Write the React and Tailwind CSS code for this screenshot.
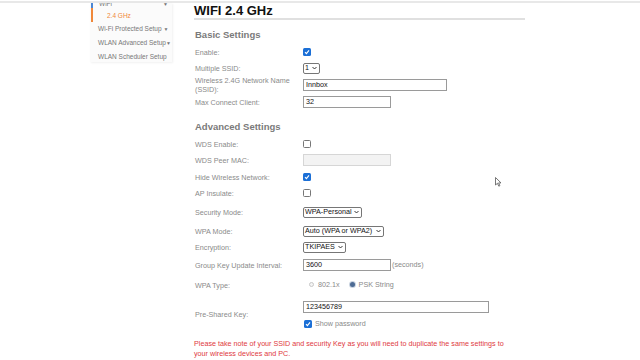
import React from 'react';

const font = { fontFamily: '"Liberation Sans", Arial, sans-serif' };

function Check({ on }) {
  if (on) {
    return (
      <span className="w-[8px] h-[8px] rounded-[1.5px] bg-[#1b6fd6] flex items-center justify-center">
        <svg width="6" height="6" viewBox="0 0 6 6">
          <path d="M1 3.2 L2.4 4.6 L5 1.4" stroke="#fff" strokeWidth="1.1" fill="none" />
        </svg>
      </span>
    );
  }
  return <span className="w-[8px] h-[8px] rounded-[1.5px] border border-[#777] bg-white" />;
}

function Select({ w, text }) {
  return (
    <div className={`${w} h-[11px] border border-[#767676] rounded-[2px] flex items-center justify-between pl-[1px] pr-[2px] text-[7.2px] text-[#111] leading-none`}>
      <span>{text}</span>
      <svg width="5" height="4" viewBox="0 0 5 4">
        <path d="M0.5 1 L2.5 3 L4.5 1" stroke="#222" strokeWidth="0.9" fill="none" />
      </svg>
    </div>
  );
}

function Input({ w, value, disabled }) {
  return (
    <div
      className={`${w} h-[12px] border flex items-center px-[2px] text-[7.2px] leading-none text-[#111] ${
        disabled ? 'bg-[#f3f3f3] border-[#d6d6d6]' : 'bg-white border-[#9a9a9a]'
      }`}
    >
      {value}
    </div>
  );
}

function Row({ label, cls, children }) {
  return (
    <div className={`flex items-center ${cls}`}>
      <div className="w-[109px] pl-[1px] text-[7.2px] leading-[9px] text-[#8a8a8a]">{label}</div>
      <div className="flex items-center gap-[1px]">{children}</div>
    </div>
  );
}

export default function App() {
  return (
    <div style={font} className="relative w-[640px] h-[360px] overflow-hidden bg-white">
      <div className="mt-[1px] h-[2px] bg-[#e8e8e8]" />
      <div className="flex items-start">
        {/* side menu */}
        <div className="ml-[90px] w-[82px] h-[59px] overflow-hidden bg-[#fbfbfb] shadow-[1px_1px_2px_rgba(0,0,0,0.06)] text-[6.5px] text-[#777] leading-[13px]">
          <div className="-mt-[3px] h-[8px] flex items-start justify-between border-l-2 border-[#4a86d4] pl-[6px] pr-[4px] ml-[1px] leading-[8px]">
            <span>WiFi</span>
            <span className="text-[5px]">▼</span>
          </div>
          <div className="h-[14px] flex items-center border-l-2 border-[#f0883a] ml-[1px] pl-[14px] text-[#f0883a]">
            2.4 GHz
          </div>
          <div className="pl-[8px]">
            Wi-Fi Protected Setup <span className="text-[5px]">▼</span>
          </div>
          <div className="pl-[8px]">
            WLAN Advanced Setup<span className="text-[5px]">▼</span>
          </div>
          <div className="pl-[8px]">WLAN Scheduler Setup</div>
        </div>

        {/* main */}
        <div className="ml-[22px] w-[331px]">
          <h1 className="text-[13px] font-bold leading-[15px] text-[#111] border-b-2 border-[#e0e0e0]">WIFI 2.4 GHz</h1>
          <h2 className="mt-[9px] pl-[1px] text-[9.5px] font-bold leading-[12px] text-[#7a7a7a]">Basic Settings</h2>

          <Row label="Enable:" cls="mt-[3px] h-[16px]">
            <Check on />
          </Row>
          <Row label="Multiple SSID:" cls="h-[16px]">
            <Select w="w-[17px]" text="1" />
          </Row>
          <Row label={<>Wireless 2.4G Network Name<br />(SSID):</>} cls="h-[18px]">
            <Input w="w-[144px]" value="Innbox" />
          </Row>
          <Row label="Max Connect Client:" cls="h-[16px]">
            <Input w="w-[88px]" value="32" />
          </Row>

          <h2 className="mt-[9px] pl-[1px] text-[9.5px] font-bold leading-[16px] text-[#7a7a7a]">Advanced Settings</h2>

          <Row label="WDS Enable:" cls="mt-[1px] h-[16px]">
            <Check />
          </Row>
          <Row label="WDS Peer MAC:" cls="h-[16px]">
            <Input w="w-[88px]" value="" disabled />
          </Row>
          <Row label="Hide Wireless Network:" cls="mt-[1px] h-[16px]">
            <Check on />
          </Row>
          <Row label="AP Insulate:" cls="h-[16px]">
            <Check />
          </Row>
          <Row label="Security Mode:" cls="mt-[2px] h-[18px]">
            <Select w="w-[59px]" text="WPA-Personal" />
          </Row>
          <Row label="WPA Mode:" cls="mt-[1px] h-[18px]">
            <Select w="w-[81px]" text="Auto (WPA or WPA2)" />
          </Row>
          <Row label="Encryption:" cls="h-[14px]">
            <Select w="w-[43px]" text="TKIPAES" />
          </Row>
          <Row label="Group Key Update Interval:" cls="mt-[2px] h-[18px]">
            <Input w="w-[88px]" value="3600" />
            <span className="text-[7.2px] text-[#8a8a8a]">(seconds)</span>
          </Row>
          <Row label="WPA Type:" cls="mt-[2px] h-[18px]">
            <div className="flex items-center text-[7.2px] text-[#8a8a8a] leading-none">
              <span className="ml-[6px] w-[5px] h-[5px] rounded-full border border-[#c8c8c8] bg-[#f4f4f4]" />
              <span className="ml-[4px]">802.1x</span>
              <span className="ml-[10px] w-[5px] h-[5px] rounded-full bg-[#4d6b94] ring-1 ring-[#c9d3e0]" />
              <span className="ml-[4px]">PSK String</span>
            </div>
          </Row>
          <Row label="Pre-Shared Key:" cls="mt-[4px] h-[32px]">
            <div className="flex flex-col">
              <Input w="w-[186px]" value="123456789" />
              <div className="mt-[7px] flex items-center gap-[3px] pl-[1px]">
                <Check on />
                <span className="text-[7.2px] leading-none text-[#8a8a8a]">Show password</span>
              </div>
            </div>
          </Row>

          <p className="mt-[9px] text-[7.2px] leading-[10px] text-[#e0393e] whitespace-nowrap">
            Please take note of your SSID and security Key as you will need to duplicate the same settings to
            <br />
            your wireless devices and PC.
          </p>
        </div>
      </div>

      {/* mouse pointer */}
      <svg className="absolute left-[495px] top-[177px]" width="7" height="10" viewBox="0 0 7 10">
        <path d="M0.5 0.5 L0.5 8 L2.4 6.3 L3.8 9.2 L4.9 8.7 L3.6 5.9 L6 5.9 Z" fill="#fff" stroke="#555" strokeWidth="0.8" />
      </svg>
    </div>
  );
}
